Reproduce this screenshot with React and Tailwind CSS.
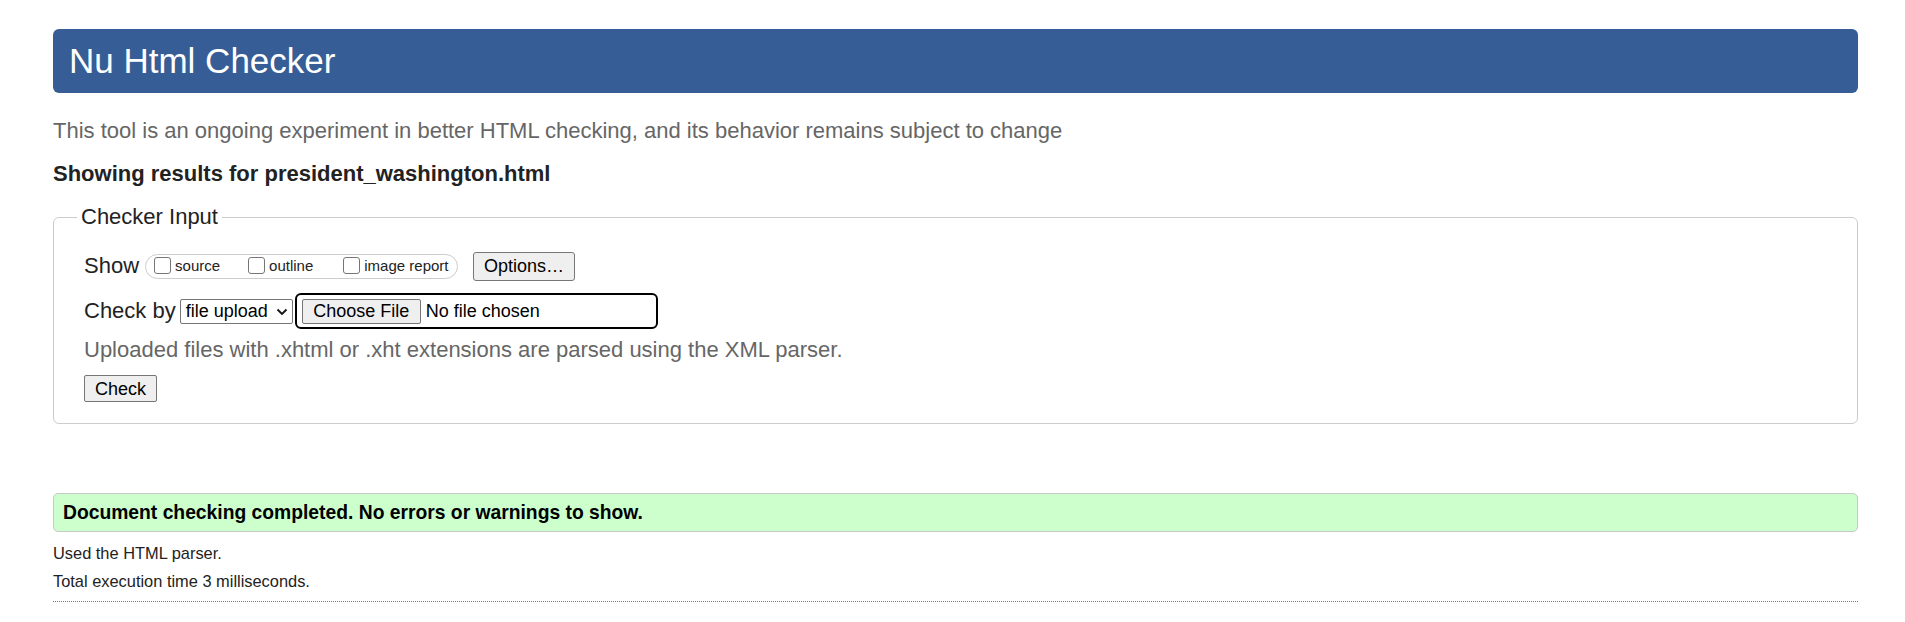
import React from "react";

function Checkbox({ label }) {
  return (
    <label className="flex items-end">
      <span className="w-[17px] h-[17px] border border-[#767676] rounded-[3px] bg-white mb-[2px]" />
      <span className="ml-[4px] text-[15px] leading-[20px] text-[#222]">{label}</span>
    </label>
  );
}

export default function App() {
  return (
    <div className="bg-white min-h-[622px] px-[53px] pt-[29px] pr-[47px] text-[#222]" style={{ fontFamily: '"Liberation Sans", Arial, sans-serif' }}>
      <h1 className="h-[64px] bg-[#365D95] rounded-[6px] text-white text-[35px] leading-[64px] pl-[16px] font-normal">
        Nu Html Checker
      </h1>
      <p className="mt-[25px] text-[22px] leading-[26px] text-[#666]">
        This tool is an ongoing experiment in better HTML checking, and its behavior remains subject to change
      </p>
      <p className="mt-[17px] text-[22px] leading-[26px] font-bold text-[#222]">
        Showing results for president_washington.html
      </p>
      <fieldset className="mt-[17px] border border-[#cccccc] rounded-[6px] pl-[30px] pr-[30px] pt-0 pb-[21px]">
        <legend className="-ml-[7px] px-[4px] text-[22px] leading-[26px] text-[#222]">Checker Input</legend>
        <div className="mt-[21px] h-[30px] flex items-center">
          <span className="text-[22px] leading-[26px]">Show</span>
          <div className="ml-[6px] h-[25px] w-[313px] border border-[#cccccc] rounded-full flex items-center pl-[8px]">
            <Checkbox label="source" />
            <span className="w-[28px]" />
            <Checkbox label="outline" />
            <span className="w-[30px]" />
            <Checkbox label="image report" />
          </div>
          <button className="ml-[15px] h-[29px] w-[102px] bg-[#efefef] border border-[#767676] rounded-[3px] text-[18px] leading-[20px] text-black">
            Options…
          </button>
        </div>
        <div className="mt-[12px] h-[36px] flex items-center">
          <span className="text-[22px] leading-[26px]">Check by</span>
          <div className="ml-[4px] h-[25px] w-[113px] border border-[#767676] rounded-[2px] bg-white flex items-center pl-[5px] pr-[4px] justify-between">
            <span className="text-[18px] leading-[20px] text-black">file upload</span>
            <svg width="12" height="8" viewBox="0 0 12 8" className="mt-[1px]">
              <path d="M1.5 1.5 L6 6 L10.5 1.5" fill="none" stroke="#111" strokeWidth="1.8" />
            </svg>
          </div>
          <div className="ml-[2px] h-[36px] w-[363px] border-2 border-black rounded-[6px] flex items-center pl-[5px]">
            <button className="h-[25px] w-[119px] bg-[#efefef] border border-[#767676] rounded-[2px] text-[18px] leading-[20px] text-black">
              Choose File
            </button>
            <span className="ml-[5px] text-[18px] leading-[20px] text-black">No file chosen</span>
          </div>
        </div>
        <p className="mt-[8px] text-[22px] leading-[26px] text-[#666]">
          Uploaded files with .xhtml or .xht extensions are parsed using the XML parser.
        </p>
        <button className="mt-[12px] h-[27px] w-[73px] bg-[#efefef] border border-[#767676] rounded-[2px] text-[18px] leading-[20px] text-black">
          Check
        </button>
      </fieldset>
      <div className="mt-[69px] h-[39px] bg-[#CCFFCC] border border-[#c8c8c8] rounded-[5px] flex items-center pl-[9px]">
        <span className="text-[19.3px] leading-[22px] font-bold text-black">
          Document checking completed. No errors or warnings to show.
        </span>
      </div>
      <p className="mt-[12px] text-[16.4px] leading-[19px] text-[#222]">Used the HTML parser.</p>
      <p className="mt-[9px] text-[16.4px] leading-[19px] text-[#222]">Total execution time 3 milliseconds.</p>
      <hr className="mt-[10px] border-0 border-t border-dotted border-[#777]" />
    </div>
  );
}
